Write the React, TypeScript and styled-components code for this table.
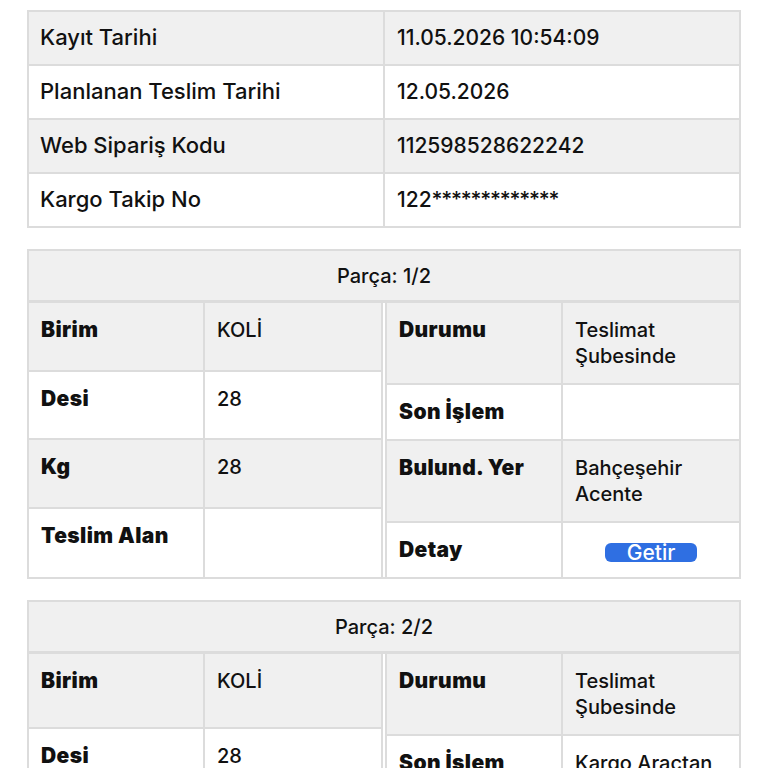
import React from "react";
import styled, { createGlobalStyle } from "styled-components";

const Global = createGlobalStyle`
  html, body { margin: 0; padding: 0; background: #fff; }
  body { font-family: Inter, "Noto Sans", "DejaVu Sans", sans-serif; color: #111; }
`;

const Page = styled.div`
  padding: 10px 27px 40px 27px;
  width: 714px;
  display: flex;
  flex-direction: column;
  gap: 21px;
`;

const InfoTable = styled.table`
  width: 100%;
  border-collapse: collapse;
  table-layout: fixed;
  border: 2px solid #dcdcdc;
`;

const InfoRow = styled.tr<{ $shade: boolean }>`
  background: ${(p) => (p.$shade ? "#f0f0f0" : "#fff")};
  height: 54px;
`;

const InfoCell = styled.td<{ $value?: boolean }>`
  border: 2px solid #dcdcdc;
  padding: 0 0 2px ${(p) => (p.$value ? "12px" : "11px")};
  font-size: ${(p) => (p.$value ? "21px" : "22px")};
  font-weight: 500;
  vertical-align: middle;
`;

const Masked = styled.span`
  letter-spacing: -1.2px;
`;

const Part = styled.section`
  border: 2px solid #dcdcdc;
  display: flex;
  flex-direction: column;
`;

const PartHeader = styled.div`
  background: #f0f0f0;
  height: 49px;
  border-bottom: 3px solid #dcdcdc;
  display: flex;
  align-items: center;
  justify-content: center;
  font-size: 20px;
  font-weight: 500;
`;

const Halves = styled.div`
  display: flex;
  gap: 2px;
`;

const Half = styled.div<{ $even?: boolean }>`
  flex: 1;
  display: grid;
  grid-template-columns: 1fr 1fr;
  grid-auto-rows: ${(p) => (p.$even ? "1fr" : "auto")};
`;

const Cell = styled.div<{ $shade: boolean; $label?: boolean; $center?: boolean; $lastRow?: boolean; $lastCol?: boolean }>`
  background: ${(p) => (p.$shade ? "#f0f0f0" : "#fff")};
  border-bottom: ${(p) => (p.$lastRow ? "none" : "2px solid #dcdcdc")};
  border-right: ${(p) => (p.$lastCol ? "none" : "2px solid #dcdcdc")};
  padding: 14px 12px;
  min-height: 26px;
  font-size: ${(p) => (p.$label ? "21px" : "20px")};
  font-weight: ${(p) => (p.$label ? 900 : 500)};
  letter-spacing: ${(p) => (p.$label ? "0.4px" : "0")};
  line-height: 26px;
  display: flex;
  align-items: flex-start;
  justify-content: ${(p) => (p.$center ? "center" : "flex-start")};
`;

const LeftHalf = styled(Half)`
  border-right: 2px solid #dcdcdc;
`;

const RightHalf = styled(Half)`
  border-left: 2px solid #dcdcdc;
`;

const GetirButton = styled.button`
  margin-top: 6px;
  background: #2f6fe2;
  color: #fff;
  border: none;
  border-radius: 6px;
  width: 92px;
  height: 19px;
  padding: 0;
  font-family: inherit;
  font-size: 21px;
  font-weight: 500;
  line-height: 19px;
  display: flex;
  align-items: center;
  justify-content: center;
  cursor: pointer;
`;

type Pair = [string, React.ReactNode];

const info: Pair[] = [
  ["Kayıt Tarihi", "11.05.2026 10:54:09"],
  ["Planlanan Teslim Tarihi", "12.05.2026"],
  ["Web Sipariş Kodu", "112598528622242"],
  ["Kargo Takip No", <>122<Masked>*************</Masked></>],
];

type PartData = {
  title: string;
  left: Pair[];
  right: Pair[];
};

const parts: PartData[] = [
  {
    title: "Parça: 1/2",
    left: [
      ["Birim", "KOLİ"],
      ["Desi", "28"],
      ["Kg", "28"],
      ["Teslim Alan", ""],
    ],
    right: [
      ["Durumu", "Teslimat Şubesinde"],
      ["Son İşlem", ""],
      ["Bulund. Yer", "Bahçeşehir Acente"],
      ["Detay", "__button__"],
    ],
  },
  {
    title: "Parça: 2/2",
    left: [
      ["Birim", "KOLİ"],
      ["Desi", "28"],
      ["Kg", "28"],
      ["Teslim Alan", ""],
    ],
    right: [
      ["Durumu", "Teslimat Şubesinde"],
      ["Son İşlem", "Kargo Araçtan İndirildi"],
      ["Bulund. Yer", "Bahçeşehir Acente"],
      ["Detay", "__button__"],
    ],
  },
];

function Rows({ rows }: { rows: Pair[] }) {
  return (
    <>
      {rows.map(([label, value], i) => {
        const shade = i % 2 === 0;
        const last = i === rows.length - 1;
        const isButton = value === "__button__";
        return (
          <React.Fragment key={i}>
            <Cell $shade={shade} $label $lastRow={last}>
              {label}
            </Cell>
            <Cell $shade={shade} $lastRow={last} $lastCol $center={isButton}>
              {isButton ? <GetirButton>Getir</GetirButton> : value}
            </Cell>
          </React.Fragment>
        );
      })}
    </>
  );
}

export default function App() {
  return (
    <>
      <Global />
      <Page>
        <InfoTable>
          <tbody>
            {info.map(([k, v], i) => (
              <InfoRow key={i} $shade={i % 2 === 0}>
                <InfoCell>{k}</InfoCell>
                <InfoCell $value>{v}</InfoCell>
              </InfoRow>
            ))}
          </tbody>
        </InfoTable>
        {parts.map((p, i) => (
          <Part key={i}>
            <PartHeader>{p.title}</PartHeader>
            <Halves>
              <LeftHalf $even>
                <Rows rows={p.left} />
              </LeftHalf>
              <RightHalf>
                <Rows rows={p.right} />
              </RightHalf>
            </Halves>
          </Part>
        ))}
      </Page>
    </>
  );
}
